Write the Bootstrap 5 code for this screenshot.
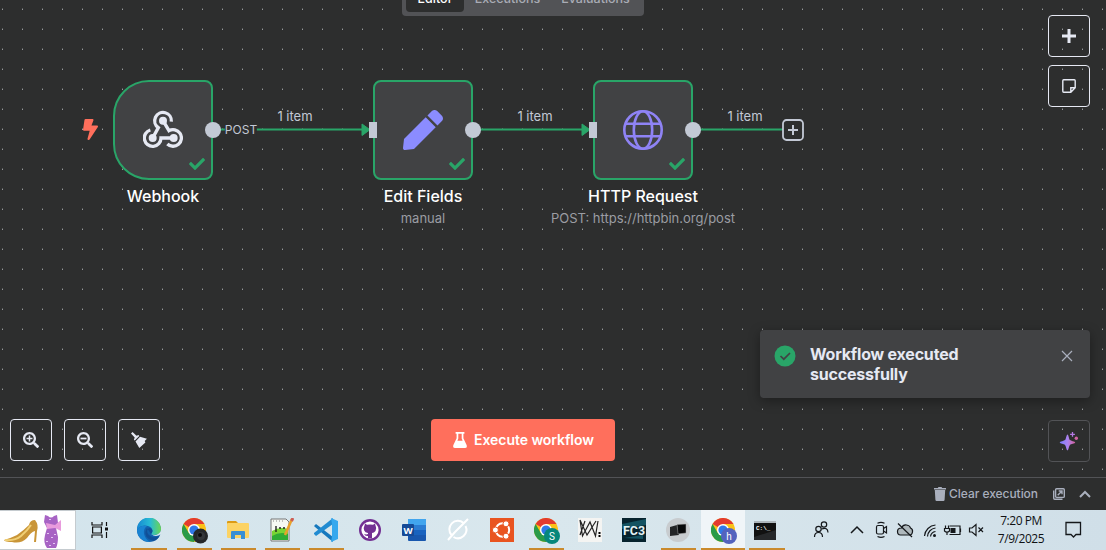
<!DOCTYPE html>
<html lang="en">
<head>
<meta charset="utf-8">
<meta name="viewport" content="width=device-width, initial-scale=1">
<title>Workflow editor</title>
<link href="https://cdn.jsdelivr.net/npm/bootstrap@5.3.0/dist/css/bootstrap.min.css" rel="stylesheet">
<style>
  :root { --ok:#29a568; --ink:#e6e9f3; --soft:#c3c9d5; --panel:#414244; --ground:#2d2e2e; --hot:#ff6f5c; }
  body { width:1106px; height:550px; background:var(--ground); font-family:Inter,"Liberation Sans",sans-serif; color:var(--ink); }
  svg { display:block; flex:none; }
  .flow-canvas { height:477px; }
  /* diagram nodes sit on a free canvas */
  .flow-node { position:absolute; top:80px; width:100px; height:100px; background:var(--panel); border:2px solid var(--ok); border-radius:8px; }
  .flow-node.trigger { border-radius:36px 8px 8px 36px; }
  .n1 { left:113px; } .n2 { left:373px; } .n3 { left:593px; }
  .tick { position:absolute; right:6px; bottom:6px; }
  .port { position:absolute; right:-10px; top:40px; width:16px; height:16px; border-radius:50%; background:var(--soft); }
  .inlet { position:absolute; left:-6px; top:40px; width:8px; height:16px; background:var(--soft); }
  .node-label { position:absolute; top:104px; left:50%; transform:translateX(-50%); white-space:nowrap; text-align:center; font-size:16px; font-weight:500; line-height:20px; color:#fff; }
  .node-label div { font-size:13px; font-weight:400; line-height:16px; margin-top:4px; color:#9b9da3; }
  .edge-label { position:absolute; top:108px; transform:translateX(-50%); font-size:13px; line-height:16px; color:var(--soft); white-space:nowrap; }
  .edge-label.method { top:122px; background:var(--ground); font-size:12px; color:var(--soft); }
  .bolt { position:absolute; left:83px; top:119px; }
  .add-node { position:absolute; left:782px; top:119px; }
  .tabs-bar { top:-20px; left:402px; width:242px; height:36px; background:#525356; border-radius:4px; padding:4px; font-size:12.5px; font-weight:500; line-height:14px; color:#a9acb5; }
  .tabs-bar span { height:28px; padding-top:8px; text-align:center; border-radius:4px; }
  .tabs-bar .on { background:var(--ground); color:#fff; }
  .w-a { width:58px; } .w-b { width:87px; } .w-c { width:89px; }
  .sq { width:42px; height:42px; padding:0; border:1px solid var(--ink); border-radius:4px; color:var(--ink); display:flex; align-items:center; justify-content:center; background:none; }
  .tools-right { right:16px; top:15px; gap:8px; }
  .tools-left { left:10px; top:419px; gap:12px; }
  .assist { right:16px; top:420px; border-color:#525356; }
  .run-btn { position:absolute; left:431px; top:419px; width:184px; height:42px; background:var(--hot); border:0; border-radius:4px; color:#fff; font-weight:600; font-size:14px; letter-spacing:-.06px; padding:0 0 1px 1px; gap:7px; }
  .notice { left:760px; top:330px; width:330px; height:68px; background:var(--panel); border-radius:4px; padding:14px 17px 0 14px; box-shadow:0 3px 12px rgba(0,0,0,.35); font-size:16px; font-weight:700; letter-spacing:-.2px; line-height:20px; color:var(--ink); }
  .notice-text { padding-left:14px; }
  .log-bar { height:33px; border-top:1px solid #525356; padding-right:14px; font-size:12px; font-weight:500; letter-spacing:-.05px; color:#a9afbd; }
  .clear-text { margin:0 15px 0 3px; }
  .os-bar { height:40px; background:linear-gradient(90deg,#d3e4ec,#d9e7ed 50%,#d0dfe8); font-family:"Open Sans","Noto Sans",sans-serif; color:#101214; }
  .pic-box { width:76px; height:40px; background:#fff; border:1px solid #c5cbcf; border-left:0; }
  .task-view { width:51px; padding-left:15px; }
  .task { width:44px; height:40px; position:relative; display:flex; align-items:center; justify-content:center; }
  .task.open::after { content:""; position:absolute; left:5px; bottom:0; width:35px; height:2px; background:#ca8a2c; }
  .task.first::after { left:4px; width:36px; }
  .task.first { margin-right:1px; }
  .task.active { background:#f0f5f8; }
  .task.active::after { left:0; width:44px; }
  .profile { margin:2px 0 0 2px; }
  .tray { margin-left:21px; }
  .clock { width:60px; margin-left:-106px; font-size:12px; line-height:18px; text-align:center; letter-spacing:-.45px; white-space:nowrap; }
</style>
</head>
<body class="d-flex flex-column overflow-hidden m-0">
<svg width="0" height="0" class="position-absolute"><defs>
  <symbol id="chrome" viewBox="0 0 24 24"><circle cx="12" cy="12" r="12" fill="#fbc116"/><path d="M12 12L1.6 6A12 12 0 0 1 22.4 6H12z" fill="#e33b2e"/><path d="M1.6 6A12 12 0 0 0 12 24L17.2 15 6.8 15z" fill="#2a9b48"/><circle cx="12" cy="12" r="6" fill="#fff"/><circle cx="12" cy="12" r="4.6" fill="#3079e8"/></symbol>
  <symbol id="tick" viewBox="0 0 512 512"><path fill="#29a568" d="M173.898 439.404l-166.4-166.4c-9.997-9.997-9.997-26.206 0-36.204l36.203-36.204c9.997-9.998 26.207-9.998 36.204 0L192 312.69 432.095 72.596c9.997-9.997 26.207-9.997 36.204 0l36.203 36.204c9.997 9.997 9.997 26.206 0 36.204l-294.4 294.401c-9.998 9.997-26.207 9.997-36.204-.001z"/></symbol>
  <symbol id="lens" viewBox="0 0 512 512"><path fill="#e6e9f3" fill-rule="evenodd" d="M505 476.700L476.700 505c-9.400 9.400-24.600 9.400-33.900 0L343 405.300c-4.500-4.500-7-10.600-7-17V372c-35.300 27.600-79.700 44-128 44C93.100 416 0 322.900 0 208S93.100 0 208 0s208 93.100 208 208c0 48.300-16.400 92.700-44 128h16.300c6.400 0 12.500 2.500 17 7l99.700 99.700c9.300 9.400 9.300 24.600 0 34zM344 208c0-75.200-60.800-136-136-136S72 132.800 72 208s60.800 136 136 136 136-60.800 136-136z"/></symbol>
</defs></svg>

<main class="flow-canvas position-relative">
  <svg class="position-absolute top-0 start-0" width="1106" height="477">
    <defs><pattern id="dots" width="20" height="20" patternUnits="userSpaceOnUse"><rect x="2" y="8.600" width="1" height="1.300" fill="#a3a5a7"/></pattern></defs>
    <rect width="1106" height="477" fill="url(#dots)"/>
    <g stroke="#29a568" stroke-width="2"><path d="M213 129.500H366M473 129.500H586M693 129.500H782"/></g>
    <g fill="#29a568" stroke="#29a568" stroke-linejoin="round"><path d="M362 124L370 129.700 362 135.500z"/><path d="M582 124L590 129.700 582 135.500z"/></g>
  </svg>
  <nav class="tabs-bar position-absolute d-flex"><span class="on w-a">Editor</span><span class="w-b">Executions</span><span class="w-c">Evaluations</span></nav>

  <svg class="bolt" width="15" height="21" viewBox="0 0 320 512" preserveAspectRatio="none"><path fill="#ff6f5c" d="M296 160H180.600l42.600-129.800C227.200 15 215.700 0 200 0H56C44 0 33.800 8.900 32.200 20.800l-32 240C-1.700 275.200 9.500 288 24 288h118.700L96.600 482.500c-3.600 15.200 8 29.500 23.300 29.500 8.400 0 16.400-4.400 20.800-12l176-304c9.300-15.900-2.200-36-20.700-36z"/></svg>

  <section class="flow-node trigger n1 d-flex align-items-center justify-content-center">
    <svg width="40" height="40" viewBox="0 0 120 120" fill="none" stroke="#e6e9f3" stroke-width="10">
      <path d="M29 84L46 53A25 25 0 1 1 85 35"/><path d="M60 32L78 62A25 25 0 1 1 73 102"/><path d="M92 84H54A25 25 0 1 1 22 60"/>
      <g fill="#e6e9f3" stroke="none"><circle cx="60" cy="32" r="12"/><circle cx="29" cy="84" r="12"/><circle cx="92" cy="84" r="12"/></g></svg>
    <svg class="tick" width="16" height="16"><use href="#tick"/></svg><i class="port"></i>
    <div class="node-label">Webhook</div>
  </section>
  <section class="flow-node n2 d-flex align-items-center justify-content-center">
    <svg width="40" height="40" viewBox="0 0 512 512"><path fill="#8b8cff" d="M290.740 93.240l128.020 128.020-277.990 277.990-114.140 12.600C11.350 513.540-1.560 500.620.14 485.340l12.700-114.220 277.900-277.880zm207.200-19.060l-60.110-60.110c-18.750-18.750-49.160-18.750-67.910 0l-56.550 56.550 128.020 128.020 56.550-56.550c18.750-18.760 18.750-49.160 0-67.910z"/></svg>
    <svg class="tick" width="16" height="16"><use href="#tick"/></svg><i class="inlet"></i><i class="port"></i>
    <div class="node-label">Edit Fields<div>manual</div></div>
  </section>
  <section class="flow-node n3 d-flex align-items-center justify-content-center">
    <svg width="40" height="40" viewBox="0 0 40 40" fill="none" stroke="#8f83f5" stroke-width="2.600"><circle cx="20" cy="20" r="18.700"/><ellipse cx="20" cy="20" rx="9.200" ry="18.700"/><path d="M2.500 13.800H37.500M2.500 26.200H37.500"/></svg>
    <svg class="tick" width="16" height="16"><use href="#tick"/></svg><i class="inlet"></i><i class="port"></i>
    <div class="node-label">HTTP Request<div>POST: https://httpbin.org/post</div></div>
  </section>
  <span class="edge-label method" style="left:241px">POST</span>
  <span class="edge-label" style="left:295px">1 item</span>
  <span class="edge-label" style="left:535px">1 item</span>
  <span class="edge-label" style="left:745px">1 item</span>
  <svg class="add-node" width="22" height="22" fill="none" stroke="#c3c9d5" stroke-width="2"><rect x="1" y="1" width="20" height="20" rx="3.500" stroke-width="1.800"/><path d="M11 6V16M6 11H16"/></svg>

  <div class="tools-right position-absolute d-flex flex-column">
    <button class="sq"><svg width="14" height="14" stroke="#e6e9f3" stroke-width="3"><path d="M7 0V14M0 7H14"/></svg></button>
    <button class="sq"><svg width="14" height="14" fill="none" stroke="#e6e9f3" stroke-width="1.400"><path d="M1.700.8H12.300Q13.200.8 13.200 1.700V8.800L8.800 13.200H1.700Q.8 13.200.8 12.300V1.700Q.8.8 1.700.8zM13 8.800H8.800V13"/></svg></button>
  </div>

  <div class="notice position-absolute d-flex" role="status">
    <svg width="22" height="24" viewBox="0 0 22 24"><circle cx="11" cy="12" r="10.500" fill="#29a568"/><path d="M6.500 12L9.800 15.200 16 9" fill="none" stroke="#414244" stroke-width="1.700"/></svg>
    <div class="notice-text flex-grow-1">Workflow executed<br>successfully</div>
    <svg width="12" height="24" stroke="#a9afbd" stroke-width="1.200"><path d="M1 7L11 17M11 7L1 17"/></svg>
  </div>

  <div class="tools-left position-absolute d-flex">
    <button class="sq"><svg width="16" height="16" viewBox="0 0 512 512" fill="#e6e9f3"><use href="#lens"/><path d="M112 184h72v-72h48v72h72v48h-72v72h-48v-72h-72z"/></svg></button>
    <button class="sq"><svg width="16" height="16" viewBox="0 0 512 512" fill="#e6e9f3"><use href="#lens"/><path d="M112 180h192v56H112z"/></svg></button>
    <button class="sq"><svg width="16" height="16" fill="#e6e9f3"><path d="M1.500 0L5.500 3.800 7.500 3 8.300 3.900 3.800 8.500 2.900 7.700 3.700 5.600 0 1.500zM9 4.800L15.900 6.700 13.700 9 14.400 10.500 8.300 16 4.500 9.400z"/></svg></button>
  </div>

  <button class="run-btn btn d-flex align-items-center justify-content-center"><svg width="14" height="16" fill="#fff"><path d="M2.600 0H11.400V1.700H10.400V6.200L13.600 13.100Q14.600 16 11.800 16H2.200Q-.6 16 .4 13.100L3.600 6.200V1.700H2.600zM5.300 1.700V6.600L4.400 8.700H9.600L8.700 6.600V1.700z" fill-rule="evenodd"/></svg><span>Execute workflow</span></button>
  <button class="sq assist position-absolute"><svg width="20" height="20"><defs><linearGradient id="ai"><stop stop-color="#7b7dff"/><stop offset=".5" stop-color="#a983f0"/><stop offset="1" stop-color="#d5609c"/></linearGradient></defs><path fill="url(#ai)" d="M8.500 3.500C9.500 3.500 10 8.300 11 9.100 11.800 10 16.200 10.500 16.200 11.500S11.800 13 11 13.900C10 14.700 9.500 19.300 8.500 19.300S7 14.700 6 13.900C5.200 13 .8 12.500.8 11.500S5.200 10 6 9.100C7 8.300 7.500 3.500 8.500 3.500z"/><path d="M13.500 1V5.800M11.100 3.400H15.900" stroke="#b77ae6" stroke-width="1.300"/><circle cx="17.300" cy="7.200" r="1.700" fill="#d264a5"/></svg></button>
</main>

<div class="log-bar d-flex align-items-center justify-content-end">
  <svg width="12" height="14" fill="#a9afbd"><path d="M0 1H3.800L4.500 0H7.500L8.200 1H12V2.500H0zM.8 3H11.200L10.600 12.800Q10.500 14 9.400 14H2.600Q1.500 14 1.400 12.800z"/></svg>
  <span class="clear-text">Clear execution</span>
  <svg width="12" height="12" fill="none" stroke="#a9afbd" stroke-width="1.400"><rect x="2.600" y=".7" width="8.700" height="8.700" rx="1"/><path d="M.7 2.500V10.300Q.7 11.300 1.700 11.300H9.500M4.700 7.300L8.800 3.200M5.700 3H9V6.300"/></svg>
  <svg width="27" height="10" fill="none" stroke="#a9afbd" stroke-width="2"><path d="M15 8L20 3 25 8"/></svg>
</div>

<footer class="os-bar d-flex align-items-center">
  <div class="pic-box"><svg width="75" height="38">
    <path d="M4 29Q11 27 17 24Q24 19 29 14Q30 9 35 9Q39 14 37 20L36 31H34L35 20Q31 21 27 27Q21 33 12 31Q5 31 4 29z" fill="#c99538"/><path d="M5 29Q15 30 21 25T31 14" fill="none" stroke="#f0cf75" stroke-width="2"/>
    <path d="M45 4L48 5Q51 8 54 5L57 4 58 12 56 17 58 26Q58 33 56 37H47Q43 32 45 24L47 17 44 11z" fill="#a763c4"/><path d="M46 12L55 14 61 9V20L55 17 47 18z" fill="#e89bdd"/><path d="M48 22v1M52 26v1M47 30v1M54 32v1M50 34v1M55 23v1M50 8v1" stroke="#e6c6f4" stroke-width="2"/></svg></div>
  <div class="task-view d-flex"><svg width="18" height="16" fill="none" stroke="#111" stroke-width="1.200"><path d="M1 0V3H11V0M1 16V13H11V16M1.600 5H10.400V11H1.600zM15.500 0V4M15.500 10V16"/><path d="M14 5.500H17V8.500H14z" fill="#111" stroke="none"/></svg></div>
  <div class="task open first"><svg width="24" height="24"><defs><linearGradient id="eg" x2="1"><stop stop-color="#1689d3"/><stop offset=".55" stop-color="#28bbd4"/><stop offset="1" stop-color="#6bd653"/></linearGradient></defs><circle cx="12" cy="12" r="12" fill="#1262ae"/><path d="M0 12A12 12 0 0 1 24 11C24 17 17 18 14 16C17 13 15 9 11 8C5 6 1 10 0 12z" fill="url(#eg)"/><path d="M0 12C2 8 6 7 10 8C5 11 6 20 13 24C6 24 0 19 0 12z" fill="#1a83d2"/><path d="M14 16C17 13 15 10 12 10C8 13 11 18 16 19C19 20 22 18 23 17C21 22 17 24 14 22C8 20 7 14 10 10" fill="#104f98"/><path d="M14 16C17 18 23 17 24 12L24 16Q19 20 14 16" fill="#d9e7ed"/></svg></div>
  <div class="task open"><svg class="profile" width="26" height="26"><use href="#chrome" width="24" height="24"/><circle cx="18.500" cy="18" r="7.500" fill="#252729"/><circle cx="19" cy="18" r="4" fill="#34373a"/><circle cx="18" cy="17" r="2" fill="#0b0b0c"/></svg></div>
  <div class="task open"><svg width="22" height="20"><path d="M0 2Q0 1 1 1H9L11 3V7H0z" fill="#dc9b14"/><rect y="3" width="22" height="15" rx="1" fill="#fcd364"/><path d="M4 19V12Q4 11 5 11H17Q18 11 18 12V19H14V15H8V19z" fill="#388fd5"/></svg></div>
  <div class="task open"><svg width="24" height="25"><path d="M1 1H16L19 4V23H1z" fill="#f7f9f4" stroke="#777"/><path d="M2 13Q10 8 18 11V22H2z" fill="#79d434"/><path d="M2 18Q10 13 18 16V22H2z" fill="#2fac35"/><path d="M6 8V14M9 10H11M13 10H15" stroke="#222" stroke-width="1.400"/><path d="M3 3H15" stroke="#888" stroke-dasharray="1 2"/><path d="M22 1L15 17" stroke="#eaa12c" stroke-width="2.500"/><path d="M23 0L21.500 3" stroke="#cc5d55" stroke-width="3"/></svg></div>
  <div class="task open"><svg width="24" height="24"><path d="M0 8L2 6 19 19V24L1 9z" fill="#1678bd"/><path d="M0 16L2 18 19 6V0L0 15z" fill="#218bd1"/><path d="M17 0L24 3V21L17 24 18 18V6z" fill="#35a8ee"/></svg></div>
  <div class="task"><svg width="22" height="22"><circle cx="11" cy="11" r="11" fill="#733093"/><circle cx="11" cy="11" r="8.600" fill="#fff"/><path d="M5.500 6.500L6 4.500 8 5.800Q11 5 14 5.800L16 4.500 16.500 6.500Q18 9 16.500 12Q15 14 13 14V19.300H9V17Q6 17.500 5 14.700Q7 16 9 15V14Q6 13.500 5.200 11.500Q4 9 5.500 6.500z" fill="#733093"/></svg></div>
  <div class="task"><svg width="24" height="22"><rect x="6" width="18" height="22" rx="1" fill="#1857ae"/><path d="M6 0H24V6H6z" fill="#42a5ee"/><path d="M6 6H24V11H6z" fill="#2b7cd3"/><path d="M6 11H24V16H6z" fill="#1963bf"/><rect y="5" width="12" height="12" rx="1" fill="#164a96"/><text x="6" y="14.500" text-anchor="middle" font-size="9.500" font-weight="700" font-family="Open Sans" fill="#fff">W</text></svg></div>
  <div class="task"><svg width="24" height="24" fill="none" stroke="#fff" stroke-width="2"><path d="M17.500 5A8.500 8.500 0 0 0 5.500 17M7.500 19A8.500 8.500 0 0 0 19.500 8M2 22L9 14M9 14L22 1"/></svg></div>
  <div class="task"><svg width="24" height="24"><rect width="24" height="24" fill="#e95420"/><circle cx="12.500" cy="12" r="6.700" fill="none" stroke="#fff" stroke-width="2"/><g fill="#fff" stroke="#e95420" stroke-width="1"><circle cx="5.400" cy="12" r="3"/><circle cx="16" cy="5.800" r="3"/><circle cx="16" cy="18.200" r="3"/></g></svg></div>
  <div class="task open"><svg class="profile" width="26" height="26"><use href="#chrome" width="24" height="24"/><circle cx="18" cy="18" r="8" fill="#07877b"/><text x="18" y="21.500" text-anchor="middle" font-size="10" font-family="Roboto" fill="#fff">S</text></svg></div>
  <div class="task"><svg width="24" height="24"><rect width="24" height="24" fill="#f4f4f2"/><path d="M2 2L4.500 18 12 4 17.500 18 20 3M2 2L9 17 18 3M2 17L7 3" fill="none" stroke="#222" stroke-width="1.200"/><path d="M20.500 14H22.500V16H20.500zM20.500 17H22.500V19H20.500z"/></svg></div>
  <div class="task"><svg width="24" height="24"><rect width="24" height="24" fill="#07232e"/><path d="M0 6L24 1V7L0 11zM2 20L21 17V21z" fill="#155362"/><text x="12" y="16.500" text-anchor="middle" textLength="22" lengthAdjust="spacingAndGlyphs" font-size="13" font-weight="700" font-family="Roboto" fill="#e3f2f4">FC3</text></svg></div>
  <div class="task open"><svg width="24" height="24"><circle cx="12" cy="12" r="12" fill="#c8cccf"/><path d="M4 9L11 7 13 17 4 18z" fill="#242526"/><path d="M11 6.500L20 6V15L12 16z" fill="#08090a" stroke="#aaa" stroke-width=".5"/></svg></div>
  <div class="task open active" style="margin-left:1px"><svg class="profile" width="26" height="26"><use href="#chrome" width="24" height="24"/><circle cx="18" cy="18" r="8" fill="#5363be"/><text x="18" y="21.500" text-anchor="middle" font-size="10" font-family="Roboto" fill="#fff">h</text></svg></div>
  <div class="task open first m-0"><svg class="me-1" width="22" height="19"><rect width="22" height="19" fill="#111"/><rect width="22" height="2" fill="#aeb6bb"/><text x="2" y="9" font-size="6" font-weight="700" font-family="Liberation Mono" fill="#fff">C:\_</text><path d="M0 16L22 9V19H0z" fill="#26282a"/></svg></div>

  <div class="tray d-flex align-items-center">
    <svg width="287" height="26" viewBox="810 517 287 26" fill="none" stroke="#15181b" stroke-width="1.200">
      <circle cx="818.500" cy="529" r="2.700"/><path d="M814.500 537Q814.500 532.500 818.500 532.500T822.500 537"/><circle cx="824" cy="524.500" r="2.700"/><path d="M821.500 529Q827.800 526.800 828 532.500"/>
      <path d="M851 533L857 527 863 533" stroke-width="1.500"/>
      <rect x="876.500" y="525.500" width="7" height="8.500" rx="1.500"/><path d="M883.500 528.500L886.500 526.500V533L883.500 531M877.500 523.300Q881 521.500 884.500 523.300M877.500 536.500Q881 538.300 884.500 536.500"/>
      <path d="M900.500 535Q897.500 535 897.500 531.500T901.500 528Q903 524.500 906.500 525T910.500 528Q913 529 912.500 532T909.500 535z" fill="#aeb8bc"/><path d="M898 523.500L912 537"/>
      <path d="M924.500 536A12 12 0 0 1 935.500 525M927.500 536.500A9 9 0 0 1 935.500 528M930.500 536.500A6 6 0 0 1 935.500 531.500"/><circle cx="934.500" cy="535.500" r="1.500" fill="#15181b" stroke="none"/>
      <path d="M949.500 526H960V534.500H949.500M960.500 528.500V532M945.500 525.500V528.500M948.500 525.500V528.500M944.500 528.500H949.500V531Q947 533.500 944.500 531zM947 532V535"/><path d="M950.500 528H955.500V533H950.500z" fill="#15181b" stroke="none"/>
      <path d="M969.500 528H972L976 524.500V535.500L972 532H969.500zM978.500 527.500L983 532M983 527.500L978.500 532"/>
      <path d="M1066 522.500H1080.500V534.500H1076L1073.500 537 1071 534.500H1066z" stroke-width="1.300"/>
    </svg>
  </div>
  <div class="clock">7:20 PM<br>7/9/2025</div>
</footer>
<script src="https://cdn.jsdelivr.net/npm/bootstrap@5.3.0/dist/js/bootstrap.bundle.min.js"></script>
</body>
</html>
